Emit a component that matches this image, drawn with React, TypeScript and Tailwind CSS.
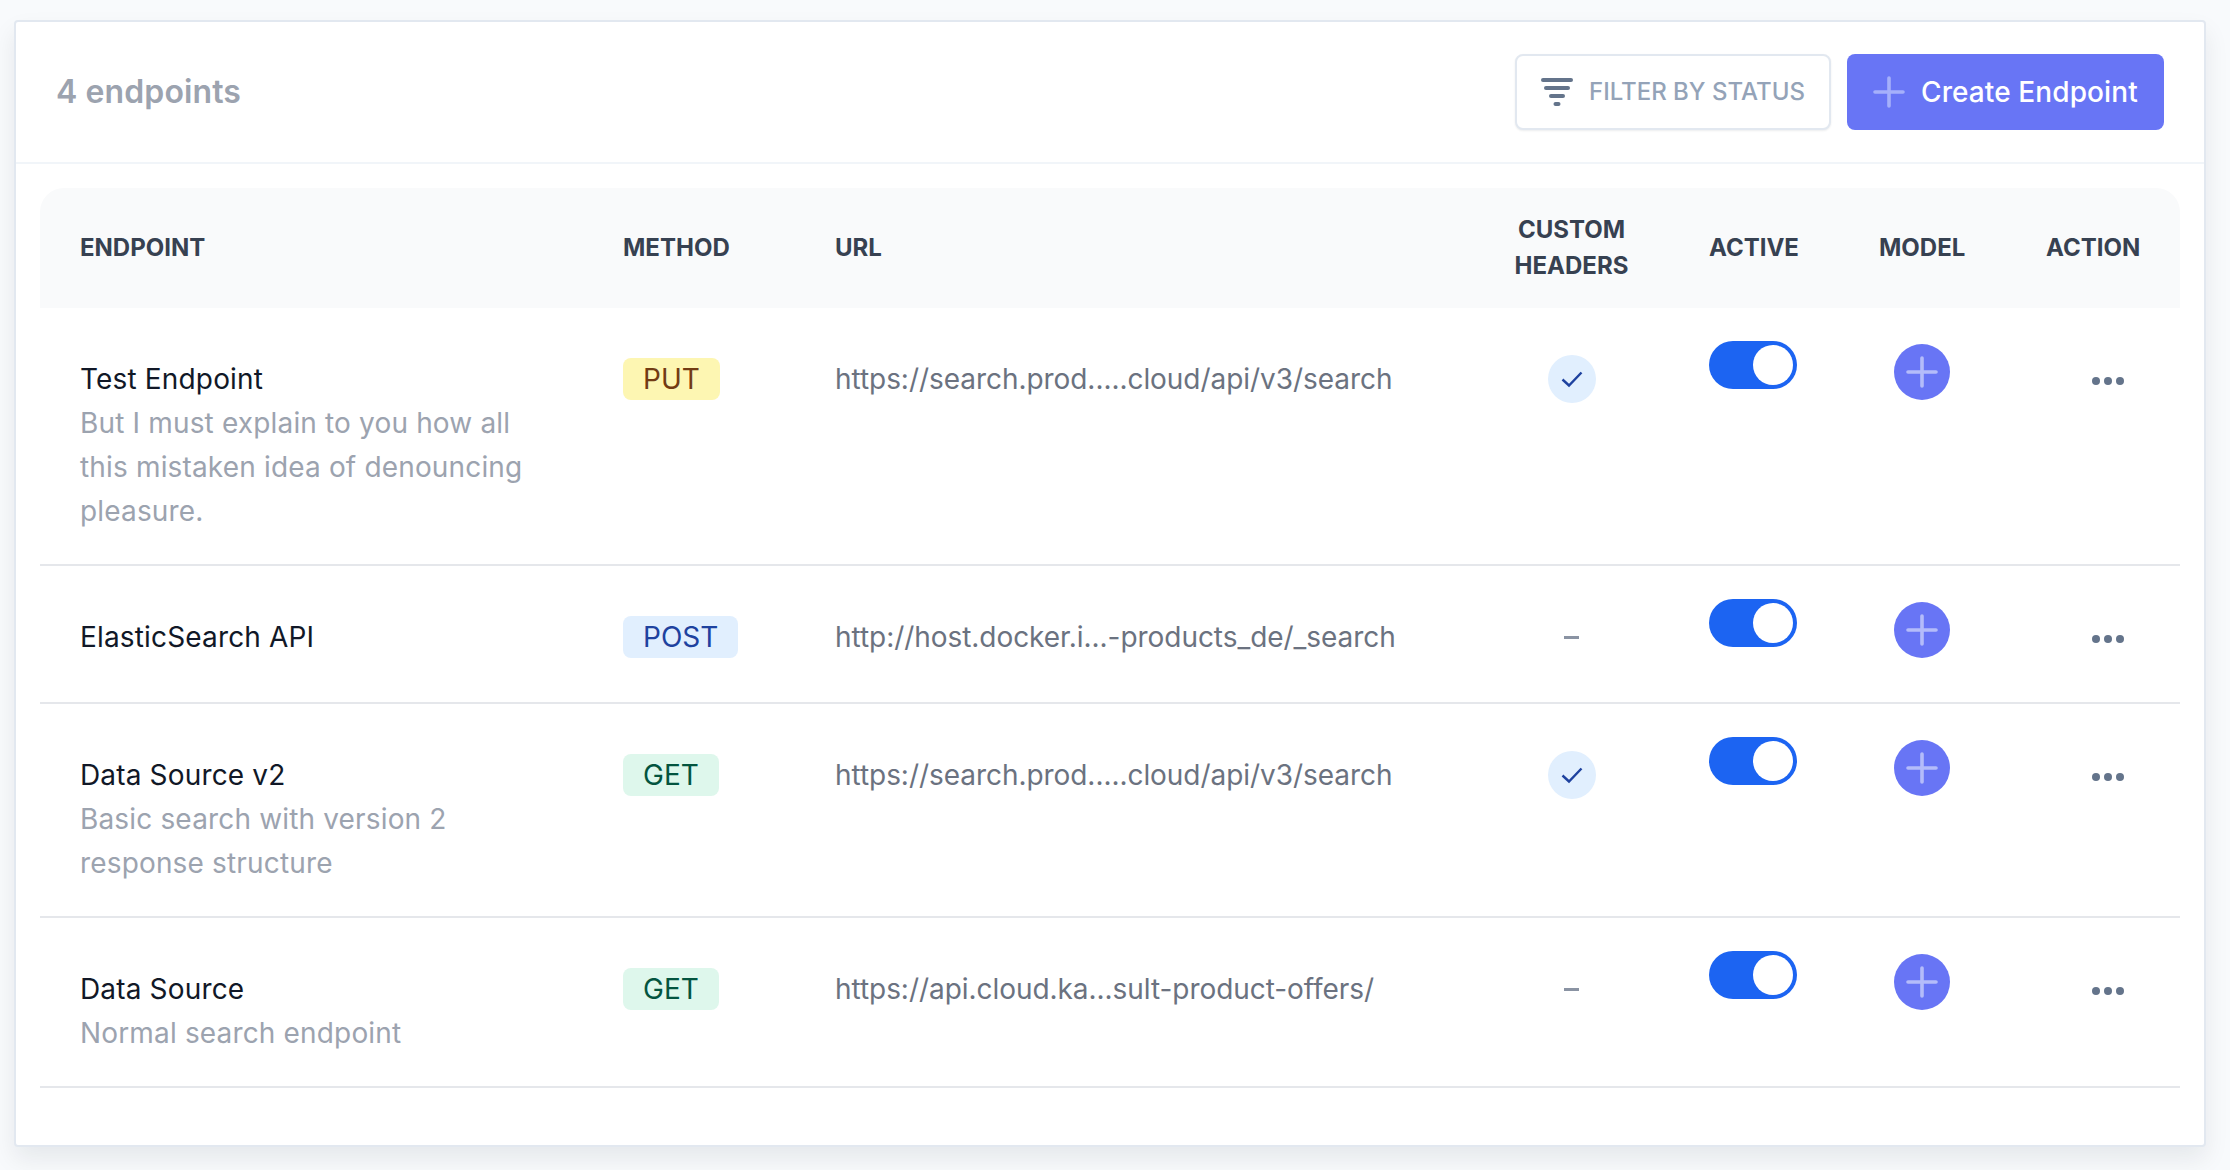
const rows = [
  { name: "Test Endpoint", desc: "But I must explain to you how all this mistaken idea of denouncing pleasure.", method: "PUT", badge: "bg-[#fdf6b2] text-[#723b13]", url: "https://search.prod.....cloud/api/v3/search", check: true },
  { name: "ElasticSearch API", desc: "", method: "POST", badge: "bg-[#e1effe] text-[#1e429f]", url: "http://host.docker.i...-products_de/_search", check: false },
  { name: "Data Source v2", desc: "Basic search with version 2 response structure", method: "GET", badge: "bg-[#def7ec] text-[#03543f]", url: "https://search.prod.....cloud/api/v3/search", check: true },
  { name: "Data Source", desc: "Normal search endpoint", method: "GET", badge: "bg-[#def7ec] text-[#03543f]", url: "https://api.cloud.ka...sult-product-offers/", check: false },
];

function Plus({ className }: { className: string }) {
  return (
    <svg viewBox="0 0 32 32" className={className} fill="none" stroke="currentColor" strokeWidth="3.6" strokeLinecap="round">
      <path d="M16 2v28M2 16h28" />
    </svg>
  );
}

const th = "px-10 text-left font-[650] text-[24px] leading-[36px] text-[#374151] uppercase align-middle";

export default function App() {
  return (
    <div className="min-h-[1170px] bg-[#f8fafc] pt-5 pl-[14px] font-['Inter',sans-serif]">
      <div className="h-[1127px] w-[2192px] bg-white border-2 border-[#e2e8f0] rounded-[4px] shadow-[0_12px_24px_rgba(15,23,42,0.08)]">
        <div className="h-[142px] border-b-2 border-[#f1f5f9] flex items-center justify-between pl-[40px] pr-[40px]">
          <div className="text-[32px] leading-[44px] font-semibold tracking-[0.1px] text-[#9ca3af]">4 endpoints</div>
          <div className="flex items-center gap-4">
            <button className="h-[76px] w-[316px] flex items-center pl-[24px] bg-white border-2 border-[#e2e8f0] rounded-[8px] shadow-[0_1px_2px_rgba(15,23,42,0.08)]">
              <svg viewBox="0 0 32 28" className="w-[32px] h-[28px] text-[#64748b]" fill="currentColor">
                <rect x="0" y="0" width="32" height="4" rx="2" />
                <rect x="3" y="8" width="26" height="4" rx="2" />
                <rect x="8" y="16" width="16" height="4" rx="2" />
                <rect x="12.500" y="24" width="7" height="4" rx="2" />
              </svg>
              <span className="ml-[16px] text-[24px] leading-[36px] font-medium text-[#94a3b8]">FILTER BY STATUS</span>
            </button>
            <button className="h-[76px] w-[317px] flex items-center pl-[26px] bg-[#6875f5] rounded-[8px]">
              <Plus className="w-[32px] h-[32px] text-[#a5b0fb]" />
              <span className="ml-[16px] text-[28px] leading-[40px] font-medium tracking-[0.1px] text-white">Create Endpoint</span>
            </button>
          </div>
        </div>
        <div className="pt-6 pl-[24px]">
          <table className="table-fixed border-collapse w-[2140px]">
            <colgroup>
              <col className="w-[543px]" />
              <col className="w-[212px]" />
              <col className="w-[680px]" />
              <col className="w-[193px]" />
              <col className="w-[171px]" />
              <col className="w-[167px]" />
              <col className="w-[174px]" />
            </colgroup>
            <thead>
              <tr className="h-[120px] bg-[#f9fafb]">
                <th className={th + " rounded-tl-[24px]"}>Endpoint</th>
                <th className={th}>Method</th>
                <th className={th}>URL</th>
                <th className={th + " !text-center !px-0"}>Custom<br />Headers</th>
                <th className={th + " !pl-[41px] !pr-0"}>Active</th>
                <th className={th}>Model</th>
                <th className={th + " rounded-tr-[24px]"}>Action</th>
              </tr>
            </thead>
            <tbody>
              {rows.map((r) => (
                <tr key={r.name + r.method} className="border-b-2 border-[#e5e7eb] align-top">
                  <td className="pl-10 pr-10 pt-[49px] pb-[31px] text-[28px] leading-[44px] tracking-[0.16px]">
                    <div className="text-[#111827]">{r.name}</div>
                    {r.desc && <div className="text-[#9ca3af]">{r.desc}</div>}
                  </td>
                  <td className="px-10 pt-[50px]">
                    <span className={"block w-fit rounded-[8px] px-5 text-[28px] leading-[42px] " + r.badge}>{r.method}</span>
                  </td>
                  <td className="px-10 pt-[49px] text-[28px] leading-[44px] tracking-[-0.05px] text-[#6b7280] whitespace-nowrap">{r.url}</td>
                  <td className="pt-12">
                    <div className="flex justify-center h-[46px] items-center">
                      {r.check ? (
                        <span className="w-[48px] h-[48px] rounded-full bg-[#e1effe] flex items-center justify-center">
                          <svg viewBox="0 0 24 24" className="w-[24px] h-[24px] text-[#1e429f]" fill="none" stroke="currentColor" strokeWidth="2.4">
                            <path d="M2.500 12.500l6.500 6L21.500 5.500" />
                          </svg>
                        </span>
                      ) : (
                        <span className="w-[15px] h-[3px] bg-[#8a93a3]" />
                      )}
                    </div>
                  </td>
                  <td className="pl-[41px] pt-[33px]">
                    <span className="flex items-center justify-end w-[88px] h-[48px] rounded-full bg-[#1c64f2] pr-[4px]">
                      <span className="w-[40px] h-[40px] rounded-full bg-white" />
                    </span>
                  </td>
                  <td className="pl-[55px] pt-[36px] pb-[44px]">
                    <span className="flex items-center justify-center w-[56px] h-[56px] rounded-full bg-[#6875f5]">
                      <Plus className="w-[32px] h-[32px] text-[#b4bcfa]" />
                    </span>
                  </td>
                  <td className="pl-[86px] pt-[51px]">
                    <div className="flex items-center gap-[4px] h-[44px] w-[33px]">
                      <span className="w-[8px] h-[8px] rounded-full bg-[#64748b]" />
                      <span className="w-[8px] h-[8px] rounded-full bg-[#64748b]" />
                      <span className="w-[8px] h-[8px] rounded-full bg-[#64748b]" />
                    </div>
                  </td>
                </tr>
              ))}
            </tbody>
          </table>
        </div>
      </div>
    </div>
  );
}
